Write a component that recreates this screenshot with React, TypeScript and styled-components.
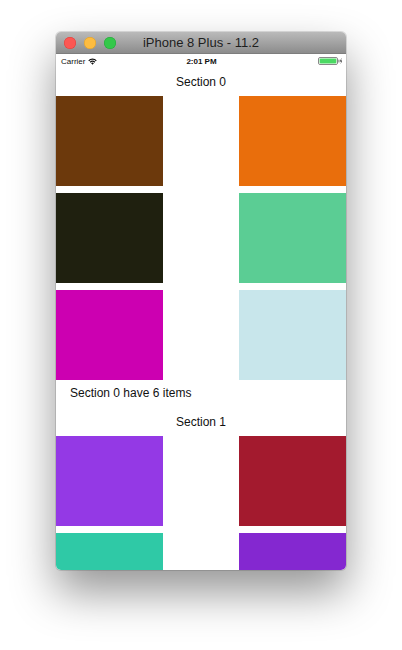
import React from "react";
import styled, { createGlobalStyle } from "styled-components";

const Global = createGlobalStyle`
  html, body { margin: 0; padding: 0; background: #ffffff; }
  body { font-family: "Liberation Sans", Arial, sans-serif; }
`;

const Page = styled.div`
  width: 402px;
  height: 650px;
  padding: 32px 0 0 56px;
  box-sizing: border-box;
  background: #ffffff;
`;

const Window = styled.div`
  width: 290px;
  height: 538px;
  border-radius: 5px;
  overflow: hidden;
  display: flex;
  flex-direction: column;
  background: #fff;
  box-shadow: 0 22px 45px rgba(0, 0, 0, 0.42), 0 0 0 1px rgba(0, 0, 0, 0.12);
`;

const TitleBar = styled.div`
  height: 22px;
  flex: none;
  position: relative;
  display: flex;
  align-items: center;
  justify-content: center;
  background: linear-gradient(#bababa, #8c8c8c);
  border-bottom: 1px solid #7d7d7d;
  box-sizing: border-box;
`;

const Lights = styled.div`
  position: absolute;
  left: 8px;
  top: 5px;
  display: flex;
  gap: 8px;
`;

const Light = styled.span<{ $c: string; $b: string }>`
  width: 12px;
  height: 12px;
  border-radius: 50%;
  background: ${(p) => p.$c};
  box-shadow: inset 0 0 0 0.5px ${(p) => p.$b};
`;

const Title = styled.div`
  font-size: 13px;
  color: #1e1e1e;
  line-height: 22px;
`;

const Screen = styled.div`
  flex: 1;
  overflow: hidden;
  display: flex;
  flex-direction: column;
  background: #fff;
`;

const StatusBar = styled.div`
  height: 14px;
  flex: none;
  display: grid;
  grid-template-columns: 1fr auto 1fr;
  align-items: center;
  padding: 0 4px 0 5px;
  font-size: 8px;
  color: #111;
`;

const StatusLeft = styled.div`
  display: flex;
  align-items: center;
  gap: 3px;
`;

const StatusCenter = styled.div`
  font-weight: bold;
  font-size: 8px;
`;

const StatusRight = styled.div`
  display: flex;
  justify-content: flex-end;
  align-items: center;
  gap: 2px;
`;

const Header = styled.div`
  height: 28px;
  flex: none;
  display: flex;
  align-items: center;
  justify-content: center;
  padding-bottom: 1px;
  box-sizing: border-box;
  font-size: 12px;
  color: #111;
`;

const Footer = styled.div`
  height: 28px;
  flex: none;
  display: flex;
  align-items: center;
  padding-left: 14px;
  padding-bottom: 3px;
  box-sizing: border-box;
  font-size: 12px;
  color: #111;
`;

const Grid = styled.div`
  display: grid;
  grid-template-columns: 107px 107px;
  justify-content: space-between;
  row-gap: 7px;
  flex: none;
`;

const Tile = styled.div<{ $c: string }>`
  height: 90px;
  background: ${(p) => p.$c};
`;

const Wifi = () => (
  <svg width="9" height="7" viewBox="0 0 18 14">
    <path d="M9 13.5 L6.2 10.4 A4 4 0 0 1 11.8 10.4 Z" fill="#111" />
    <path d="M3.4 7.6 A8 8 0 0 1 14.6 7.6 L13 9.3 A5.7 5.7 0 0 0 5 9.3 Z" fill="#111" />
    <path d="M0.6 4.6 A12 12 0 0 1 17.4 4.6 L15.8 6.3 A9.7 9.7 0 0 0 2.2 6.3 Z" fill="#111" />
  </svg>
);

const Battery = () => (
  <svg width="24" height="8" viewBox="0 0 24 8">
    <rect x="0.5" y="0.5" width="19" height="7" rx="1.5" fill="none" stroke="#888" />
    <rect x="1.6" y="1.6" width="16.8" height="4.8" rx="0.8" fill="#4cd964" />
    <rect x="20.3" y="2.5" width="1.2" height="3" rx="0.5" fill="#888" />
    <path d="M23.6 0.6 L22 4.4 L23.1 4.4 L22.6 7.4 L24 3.4 L23 3.4 Z" fill="#111" />
  </svg>
);

const sections: { title: string; colors: string[]; footer?: string }[] = [
  {
    title: "Section 0",
    colors: ["#6c390c", "#e96e0c", "#1f200f", "#5bcd94", "#cc00b1", "#c8e6eb"],
    footer: "Section 0 have 6 items",
  },
  {
    title: "Section 1",
    colors: ["#9439e5", "#a31a2e", "#2fc9a6", "#8428d0"],
  },
];

export default function App() {
  return (
    <>
      <Global />
      <Page>
        <Window>
          <TitleBar>
            <Lights>
              <Light $c="#fc5753" $b="#de3f3a" />
              <Light $c="#fdbc40" $b="#de9e2a" />
              <Light $c="#34c84a" $b="#25a53a" />
            </Lights>
            <Title>iPhone 8 Plus - 11.2</Title>
          </TitleBar>
          <Screen>
            <StatusBar>
              <StatusLeft>
                <span>Carrier</span>
                <Wifi />
              </StatusLeft>
              <StatusCenter>2:01 PM</StatusCenter>
              <StatusRight>
                <Battery />
              </StatusRight>
            </StatusBar>
            {sections.map((s) => (
              <React.Fragment key={s.title}>
                <Header>{s.title}</Header>
                <Grid>
                  {s.colors.map((c, i) => (
                    <Tile key={i} $c={c} />
                  ))}
                </Grid>
                {s.footer && <Footer>{s.footer}</Footer>}
              </React.Fragment>
            ))}
          </Screen>
        </Window>
      </Page>
    </>
  );
}
